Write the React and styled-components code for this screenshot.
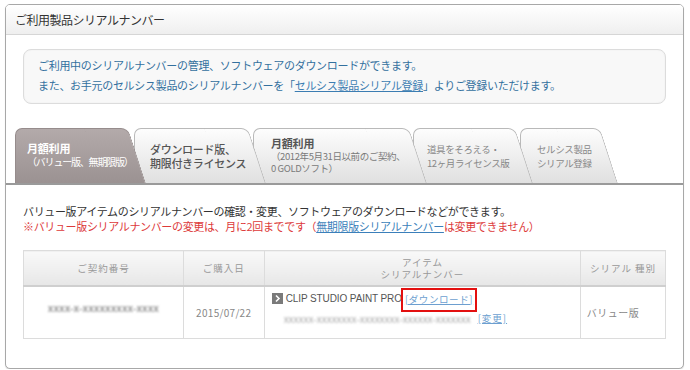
import styled, { createGlobalStyle } from "styled-components";

const GlobalStyle = createGlobalStyle`
  body {
    margin: 0;
    background: #ffffff;
    font-family: "Noto Sans CJK JP", "Noto Sans", sans-serif;
  }
`;

const tabs = [
  { title: "月額利用", lines: ["（バリュー版、無期限版）"], w: 131, ml: 0, pl: 12, active: true },
  { lines: ["ダウンロード版、", "期限付きライセンス"], w: 132, ml: -12, pl: 16, strong: true },
  { title: "月額利用", lines: ["（2012年5月31日以前のご契約、", "0 GOLDソフト）"], w: 174, ml: -13, pl: 18, small: true },
  { lines: ["道具をそろえる・", "12ヶ月ライセンス版"], w: 120, ml: -14, pl: 14 },
  { lines: ["セルシス製品", "シリアル登録"], w: 98, ml: -13, pl: 17 },
];

export default function App() {
  return (
    <>
      <GlobalStyle />
      <Page>
        <Panel>
          <PanelHeader>ご利用製品シリアルナンバー</PanelHeader>
          <InfoBox>
            <p>ご利用中のシリアルナンバーの管理、ソフトウェアのダウンロードができます。</p>
            <p>
              また、お手元のセルシス製品のシリアルナンバーを「<InfoLink href="#">セルシス製品シリアル登録</InfoLink>」よりご登録いただけます。
            </p>
          </InfoBox>

          <TabRow>
            {tabs.map((t, i) => (
              <Tab key={i} $w={t.w} $ml={t.ml} $pl={t.pl} $z={t.active ? 10 : 6 - i} $active={t.active}>
                {t.title && <TabTitle $active={t.active}>{t.title}</TabTitle>}
                {t.lines.map((l) => (
                  <TabLine key={l} $active={t.active} $strong={t.strong} $small={t.small} $title={!!t.title}>
                    {l}
                  </TabLine>
                ))}
              </Tab>
            ))}
          </TabRow>

          <Content>
            <Lead>バリュー版アイテムのシリアルナンバーの確認・変更、ソフトウェアのダウンロードなどができます。</Lead>
            <Notice>
              ※バリュー版シリアルナンバーの変更は、月に2回までです（<NoticeLink href="#">無期限版シリアルナンバー</NoticeLink>は変更できません）
            </Notice>

            <Table>
              <thead>
                <tr>
                  <Th $w={159}>ご契約番号</Th>
                  <Th $w={80}>ご購入日</Th>
                  <Th $w={316}>
                    アイテム
                    <br />
                    シリアルナンバー
                  </Th>
                  <Th $w={84}>シリアル 種別</Th>
                </tr>
              </thead>
              <tbody>
                <tr>
                  <Td>
                    <Blurred $up $dark>xxxx-x-xxxxxxxxx-xxxx</Blurred>
                  </Td>
                  <Td>2015/07/22</Td>
                  <ItemCell>
                    <ItemLine>
                      <ArrowIcon viewBox="0 0 11 11">
                        <rect width="11" height="11" fill="#7a7a7a" />
                        <path d="M4 2.5 L7 5.5 L4 8.5" fill="none" stroke="#fff" strokeWidth="1.6" />
                      </ArrowIcon>
                      <ProductName>CLIP STUDIO PAINT PRO</ProductName>
                      <DownloadLink href="#">[ダウンロード]</DownloadLink>
                    </ItemLine>
                    <SerialLine>
                      <Blurred>xxxxxx-xxxxxxxx-xxxxxxxx-xxxxxx-xxxxxxx</Blurred>
                      <SmallLink href="#">[変更]</SmallLink>
                    </SerialLine>
                  </ItemCell>
                  <TypeCell>バリュー版</TypeCell>
                </tr>
              </tbody>
            </Table>
          </Content>
        </Panel>
      </Page>
    </>
  );
}

const Page = styled.div`
  padding: 4px 6px 0 5px;
`;

const Panel = styled.div`
  width: 679px;
  box-sizing: border-box;
  border: 1px solid #a8a8a8;
  border-radius: 5px;
  padding-bottom: 29px;
  background: #fff;
  box-shadow: 0 1px 1px rgba(0, 0, 0, 0.15);
`;

const PanelHeader = styled.div`
  height: 29px;
  display: flex;
  align-items: center;
  padding-left: 9px;
  border-bottom: 1px solid #d6d6d6;
  border-radius: 4px 4px 0 0;
  background: linear-gradient(#ffffff, #efefef);
  color: #333;
  font-size: 12px;
  letter-spacing: -0.5px;
`;

const InfoBox = styled.div`
  margin: 14px 17px 0 17px;
  height: 55px;
  box-sizing: border-box;
  border: 1px solid #dcdcdc;
  border-radius: 8px;
  background: #f8f8f8;
  box-shadow: inset 0 0 2px rgba(0, 0, 0, 0.06);
  padding: 5px 0 0 14px;
  color: #33709e;
  font-size: 11px;
  letter-spacing: -0.3px;

  p {
    margin: 0;
    line-height: 20px;
  }
`;

const InfoLink = styled.a`
  color: #3c7db2;
  text-decoration: underline;
`;

const TabRow = styled.div`
  margin-top: 24px;
  padding-left: 9px;
  display: flex;
  align-items: flex-end;
  border-bottom: 2px solid #9a9a9a;
`;

const Tab = styled.div`
  position: relative;
  z-index: ${(p) => p.$z};
  width: ${(p) => p.$w}px;
  height: 55px;
  margin-left: ${(p) => p.$ml}px;
  box-sizing: border-box;
  padding-left: ${(p) => p.$pl}px;
  display: flex;
  flex-direction: column;
  justify-content: center;

  &::before,
  &::after {
    content: "";
    position: absolute;
    top: 0;
    bottom: 0;
    z-index: -1;
    box-sizing: border-box;
    border: 1px solid ${(p) => (p.$active ? "#968c8c" : "#b9b9b9")};
    border-bottom: none;
    background: ${(p) =>
      p.$active
        ? "linear-gradient(#b3aaaa, #9b9292)"
        : "linear-gradient(#fdfdfd, #e0e0e0)"};
  }

  &::before {
    left: 0;
    right: 28px;
    border-right: none;
    border-radius: 7px 0 0 0;
  }

  &::after {
    right: 18px;
    width: 44px;
    border-left: none;
    border-radius: 0 7px 0 0;
    transform: skewX(18deg);
    transform-origin: top;
  }
`;

const TabTitle = styled.div`
  font-size: 11px;
  font-weight: 700;
  line-height: 13px;
  letter-spacing: -0.2px;
  color: ${(p) => (p.$active ? "#ffffff" : "#555")};
`;

const TabLine = styled.div`
  white-space: nowrap;
  line-height: ${(p) => (p.$small ? "12px" : "14px")};
  font-size: ${(p) => (p.$small ? "9.5px" : p.$title ? "10px" : p.$strong ? "11px" : "9.5px")};
  font-weight: ${(p) => (p.$strong ? 500 : 400)};
  letter-spacing: ${(p) => (p.$active ? "-1.2px" : p.$strong ? "-0.3px" : "-0.4px")};
  color: ${(p) => (p.$active ? "#ffffff" : p.$strong ? "#555" : p.$small ? "#7a7a7a" : "#888")};
`;

const Content = styled.div`
  padding: 19px 17px 0 17px;
`;

const Lead = styled.p`
  margin: 0;
  font-size: 11px;
  line-height: 15px;
  letter-spacing: -0.35px;
  color: #333;
`;

const Notice = styled.p`
  margin: 0;
  font-size: 11px;
  line-height: 15px;
  letter-spacing: -0.35px;
  color: #dd3a3a;
`;

const NoticeLink = styled.a`
  color: #3b7fba;
  text-decoration: underline;
`;

const Table = styled.table`
  margin-top: 16px;
  border-collapse: collapse;
  table-layout: fixed;
`;

const Th = styled.th`
  width: ${(p) => p.$w}px;
  height: 34px;
  padding: 0;
  border: 1px solid #dcdcdc;
  border-bottom: 2px solid #cfcfcf;
  background: linear-gradient(#f9f9f9, #e7e7e7);
  color: #999;
  font-size: 9.5px;
  font-weight: 400;
  line-height: 12px;
  letter-spacing: 1px;
`;

const Td = styled.td`
  height: 47px;
  padding: 0;
  border: 1px solid #dcdcdc;
  text-align: center;
  vertical-align: middle;
  color: #888;
  font-size: 10px;
  letter-spacing: 0.3px;
`;

const TypeCell = styled(Td)`
  padding-right: 20px;
  letter-spacing: 0.5px;
`;

const ItemCell = styled(Td)`
  text-align: left;
  vertical-align: top;
  padding: 4px 0 0 7px;
`;

const ItemLine = styled.div`
  display: flex;
  align-items: center;
  height: 15px;
`;

const ArrowIcon = styled.svg`
  width: 11px;
  height: 11px;
  margin-right: 3px;
  flex: none;
`;

const ProductName = styled.span`
  font-family: "Liberation Sans", Arial, sans-serif;
  font-size: 10px;
  letter-spacing: -0.1px;
  color: #555;
`;

const DownloadLink = styled.a`
  position: relative;
  margin-left: 3px;
  font-size: 9.5px;
  letter-spacing: 0.6px;
  color: #6d9fd0;
  text-decoration: underline;

  &::after {
    content: "";
    position: absolute;
    left: -4px;
    top: -4px;
    right: -4px;
    bottom: -6px;
    border: 2px solid #e31010;
  }
`;

const SerialLine = styled.div`
  display: flex;
  align-items: center;
  margin-top: 5px;
  padding-left: 12px;
  height: 14px;
`;

const Blurred = styled.span`
  display: inline-block;
  white-space: nowrap;
  color: ${(p) => (p.$dark ? "#999" : "#aaa")};
  font-size: 10px;
  font-weight: ${(p) => (p.$dark ? 700 : 400)};
  letter-spacing: 0;
  filter: blur(1.2px);
  position: relative;
  top: ${(p) => (p.$up ? "-5px" : "0")};
`;

const SmallLink = styled.a`
  margin-left: 7px;
  font-size: 9.5px;
  letter-spacing: 1px;
  color: #6d9fd0;
  text-decoration: underline;
`;
